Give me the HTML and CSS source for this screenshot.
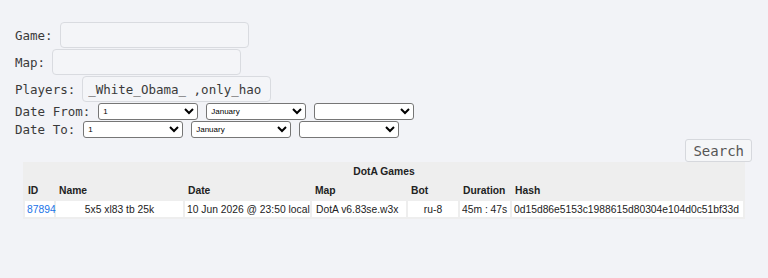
FILE: index.html
```html
<!DOCTYPE html>
<html lang="en">
<head>
    <meta charset="UTF-8">
    <meta name="viewport" content="width=device-width, initial-scale=1.0">
    <link rel="stylesheet" href="styles.css">
    <title>DotA Games</title>
</head>
<body>

    <form id="searchForm" class="search-form">
        <div class="row">
            <label for="game">Game:</label>
            <input type="text" id="game" class="text-field">
        </div>
        <div class="row">
            <label for="map">Map:</label>
            <input type="text" id="map" class="text-field">
        </div>
        <div class="row">
            <label for="players">Players:</label>
            <input type="text" id="players" class="text-field" value="_White_Obama_ ,only_hao">
        </div>
        <div class="row date-row">
            <label for="fromDay">Date From:</label>
            <select id="fromDay"><option>1</option></select>
            <select id="fromMonth"><option>January</option></select>
            <select id="fromYear"><option></option></select>
        </div>
        <div class="row date-row">
            <label for="toDay">Date To:</label>
            <select id="toDay"><option>1</option></select>
            <select id="toMonth"><option>January</option></select>
            <select id="toYear"><option></option></select>
        </div>
        <div class="actions">
            <button type="submit" class="search-btn">Search</button>
        </div>
    </form>

    <table class="games">
        <colgroup>
            <col class="c-id">
            <col class="c-name">
            <col class="c-date">
            <col class="c-map">
            <col class="c-bot">
            <col class="c-dur">
            <col>
        </colgroup>
        <tr class="caption-row">
            <th colspan="7" class="caption">DotA Games</th>
        </tr>
        <tr class="head-row">
            <th>ID</th>
            <th>Name</th>
            <th>Date</th>
            <th>Map</th>
            <th>Bot</th>
            <th>Duration</th>
            <th>Hash</th>
        </tr>
        <tr class="data-row">
            <td><a href="#">87894</a></td>
            <td class="center">5x5 xl83 tb 25k</td>
            <td>10 Jun 2026 @ 23:50 local</td>
            <td class="map">DotA v6.83se.w3x</td>
            <td class="center">ru-8</td>
            <td>45m : 47s</td>
            <td>0d15d86e5153c1988615d80304e104d0c51bf33d</td>
        </tr>
    </table>

</body>
</html>
```

FILE: styles.css
```css
body {
    background-color: #f2f3f7;
    margin: 0;
    padding: 22px 16px 0 15px;
    font-family: "DejaVu Sans Mono", monospace;
    font-size: 12.5px;
    color: #3a3a3a;
}

.row {
    display: flex;
    align-items: center;
    gap: 7px;
    margin-bottom: 1px;
}

.text-field {
    width: 189px;
    height: 26px;
    box-sizing: border-box;
    margin: 0;
    padding: 0 5px;
    border: 1px solid #d9dbe0;
    border-radius: 4px;
    background-color: #f4f5f8;
    font-family: "DejaVu Sans Mono", monospace;
    font-size: 12.5px;
    color: #3a3a3a;
}

.date-row {
    gap: 8px;
    height: 17px;
}

select {
    width: 100px;
    height: 17px;
    margin: 0;
    font-family: "Liberation Sans", Arial, sans-serif;
    font-size: 8px;
    background-color: #ffffff;
    border-radius: 3px;
}

.actions {
    text-align: right;
    margin-top: 1px;
    height: 23px;
}

.search-btn {
    height: 23px;
    padding: 0 7px;
    border: 1px solid #d6d8dd;
    border-radius: 3px;
    background-color: #f5f6f8;
    font-family: "DejaVu Sans Mono", monospace;
    font-size: 14px;
    color: #555;
    cursor: pointer;
}

.games {
    width: 722px;
    margin: 0 0 0 8px;
    table-layout: fixed;
    background-color: #eeeeee;
    border-spacing: 2px;
    font-family: "Liberation Sans", Arial, sans-serif;
    font-size: 10.3px;
    color: #222;
}

.c-id { width: 29px; }
.c-name { width: 127px; }
.c-date { width: 125px; }
.c-map { width: 94px; }
.c-bot { width: 50px; }
.c-dur { width: 50px; }

.games th {
    text-align: left;
    padding: 0 3px;
    white-space: nowrap;
}

.caption-row th {
    height: 15px;
    text-align: center;
}

.head-row th {
    height: 18px;
}

.games td {
    height: 16px;
    background-color: #ffffff;
    padding: 0 2px;
    white-space: nowrap;
}

.games td.center {
    text-align: center;
}

.games td.map {
    padding-left: 4px;
}

.games a {
    color: #1a73e8;
    text-decoration: none;
}
```
